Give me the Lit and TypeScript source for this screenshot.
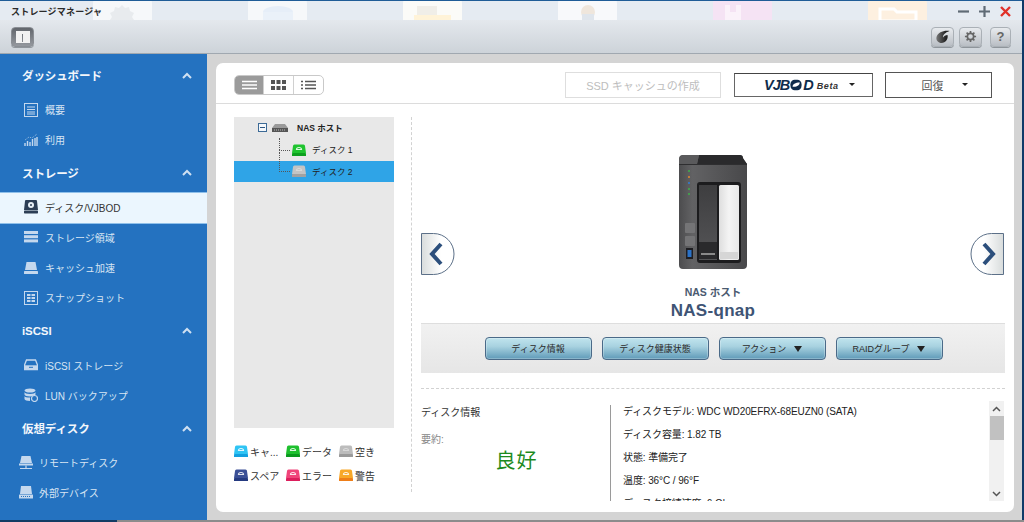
import { LitElement, html, css, svg } from "lit";
import { customElement } from "lit/decorators.js";

const disk = (top: string, bottom: string, mark = "#fff") => html`<svg class="disk" viewBox="0 0 14 12" width="14" height="12">
  <path d="M2.5 0.5h9a1.5 1.5 0 0 1 1.5 1.5l1 7h-14l1-7a1.5 1.5 0 0 1 1.5-1.5z" fill=${top}/>
  <rect x="0" y="9" width="14" height="3" rx="0.6" fill=${bottom}/>
  <path d="M4.5 5.5a2.5 2 0 0 1 5 0z" fill="none" stroke=${mark} stroke-width="1.2" opacity=".85"/>
</svg>`;

const chev = html`<svg class="chev" viewBox="0 0 10 7" width="10" height="7"><path d="M1 6l4-4 4 4" fill="none" stroke="#cfe0f2" stroke-width="2"/></svg>`;

const ic = {
  list: html`<svg viewBox="0 0 14 14" width="14" height="14"><rect x=".5" y=".5" width="13" height="13" fill="none" stroke="#c4d8ee"/><path d="M3 4h8M3 6.5h8M3 9h8M3 11h8" stroke="#c4d8ee"/></svg>`,
  chart: html`<svg viewBox="0 0 14 14" width="14" height="14"><path d="M1 13v-3M3.5 13V8M6 13V9M8.5 13V6M11 13V5M13 13V4" stroke="#c4d8ee" stroke-width="1.4"/><path d="M1 7l4-3 3 1 5-4" fill="none" stroke="#c4d8ee" stroke-width=".7" stroke-dasharray="1 1"/></svg>`,
  diskActive: html`<svg viewBox="0 0 14 14" width="14" height="14"><path d="M2 0h10a1 1 0 0 1 1 1l1 9H0l1-9a1 1 0 0 1 1-1z" fill="#2c3e55"/><rect y="10.5" width="14" height="3" rx=".7" fill="#2c3e55"/><circle cx="7" cy="5" r="3" fill="#e8f0f6"/><circle cx="7" cy="5" r="1" fill="#2c3e55"/></svg>`,
  stack: html`<svg viewBox="0 0 14 12" width="14" height="12"><rect y="0" width="14" height="3" fill="#c4d8ee"/><rect y="4.2" width="14" height="3" fill="#c4d8ee"/><rect y="8.4" width="14" height="3" fill="#c4d8ee"/></svg>`,
  cache: html`<svg viewBox="0 0 14 12" width="14" height="12"><path d="M2.5 0h9l1.5 8H1z" fill="#c4d8ee"/><rect y="9" width="14" height="3" rx=".6" fill="#c4d8ee"/></svg>`,
  snap: html`<svg viewBox="0 0 14 14" width="14" height="14"><rect x=".5" y=".5" width="13" height="13" fill="none" stroke="#c4d8ee"/><path d="M3 3h8v2H3zM3 6h8v2H3zM3 9h8v2H3z" fill="#c4d8ee"/><path d="M7 3v8" stroke="#2472c0"/></svg>`,
  iscsi: html`<svg viewBox="0 0 14 12" width="14" height="12"><path d="M2.5 1h9l2 5v4.5h-13V6z" fill="none" stroke="#c4d8ee" stroke-width="1.3"/><path d="M1 6.3h12v4H1z" fill="#c4d8ee"/><path d="M5 8.3h4" stroke="#2472c0"/></svg>`,
  lun: html`<svg viewBox="0 0 14 14" width="14" height="14"><ellipse cx="6" cy="2.5" rx="5.5" ry="2" fill="#c4d8ee"/><path d="M.5 4v2.5c0 1 2.5 2 5.5 2s5.5-1 5.5-2V4c0 1-2.5 2-5.5 2S.5 5 .5 4zM.5 8v3c0 1 2.5 2 5.5 2V9.5C3 9.5.5 9 .5 8z" fill="#c4d8ee"/><circle cx="10.5" cy="10.5" r="3" fill="#2472c0" stroke="#c4d8ee" stroke-width="1.2"/></svg>`,
  remote: html`<svg viewBox="0 0 14 14" width="14" height="14"><path d="M2.5 0h9l1.5 7H1z" fill="#c4d8ee"/><path d="M0 7.5h14v2H0z" fill="#c4d8ee"/><path d="M7 9.5V12M1 12.5h12" stroke="#c4d8ee" stroke-width="1.2"/></svg>`,
  ext: html`<svg viewBox="0 0 14 13" width="14" height="13"><path d="M2 0h10l1 8H1z" fill="#c4d8ee"/><rect y="8.5" width="14" height="4" rx=".6" fill="#c4d8ee"/><path d="M2 10.5h10" stroke="#2472c0" stroke-dasharray="1 1"/></svg>`,
};

const device = html`<svg viewBox="0 0 70 114" width="70" height="114">
  <defs>
    <linearGradient id="bd" x1="0" x2="1" y1="0" y2="0"><stop offset="0" stop-color="#4c4c4e"/><stop offset=".2" stop-color="#626264"/><stop offset="1" stop-color="#48484a"/></linearGradient>
    <linearGradient id="wh" x1="0" x2="1" y1="0" y2="0"><stop offset="0" stop-color="#dedede"/><stop offset=".5" stop-color="#f4f4f4"/><stop offset="1" stop-color="#e8e8e8"/></linearGradient>
    <linearGradient id="bay" x1="0" x2="0" y1="0" y2="1"><stop offset="0" stop-color="#3e3e40"/><stop offset="1" stop-color="#555557"/></linearGradient>
  </defs>
  <path d="M1 9V4a4 4 0 0 1 4-4h56a4 4 0 0 1 4 4l4 5v101a4 4 0 0 1-4 4H5a4 4 0 0 1-4-4z" fill="url(#bd)"/>
  <path d="M21 0h41a3 3 0 0 1 3 3l4 6H19z" fill="#2a2a2c"/>
  <path d="M1 9V5a5 5 0 0 1 5-5h15l-2 9z" fill="#5a5a5c"/>
  <path d="M1 9.5h68" stroke="#2e2e30"/>
  <circle cx="11" cy="16" r="1" fill="#3eb04a"/><circle cx="11" cy="22" r="1" fill="#e08a2a"/><circle cx="11" cy="28" r="1" fill="#2f7ed8"/><circle cx="11" cy="34" r="1" fill="#3eb04a"/><circle cx="11" cy="39" r="1" fill="#3eb04a"/>
  <rect x="19" y="27" width="44" height="81" rx="3" fill="#1c1c1e"/>
  <rect x="21" y="30" width="18" height="75" fill="url(#bay)"/>
  <rect x="21" y="87" width="18" height="17" fill="#2a2a2c"/><rect x="23" y="98" width="14" height="2" fill="#8a8a8a"/>
  <rect x="41" y="30" width="20" height="75" rx="1.5" fill="url(#wh)"/><rect x="42" y="97" width="18" height="7" fill="#d6d6d6"/>
  <rect x="7" y="68" width="10" height="10" rx="1" fill="#747476"/><rect x="7" y="81" width="10" height="10" rx="1" fill="#747476"/>
  <rect x="8" y="93" width="7" height="11" fill="#1e1e22"/><rect x="9.5" y="95" width="4" height="7" fill="#2a72c8"/>
</svg>`;

const vjLogo = html`<svg viewBox="0 0 14 13" width="12" height="12"><rect x=".5" y=".5" width="13" height="12" rx="5" fill="#0e2c4c"/><path d="M3 8.5c0-3 3-5 8.5-5-.5 3-3 5.5-8.500 5z" fill="#fff"/></svg>`;

@customElement("app-root")
export class AppRoot extends LitElement {
  static styles = css`
    :host { display: block; width: 1024px; height: 522px; overflow: hidden; background: #0f3a68; }
  `;
  render() { return html`<storage-window></storage-window>`; }
}

@customElement("storage-window")
export class StorageWindow extends LitElement {
  static styles = css`
    :host { display: flex; flex-direction: column; width: 1024px; height: 522px; font-family: "Liberation Sans", "Noto Sans CJK JP", sans-serif; color: #333; }
    * { box-sizing: border-box; }
    .win { width: 1022px; height: 520px; display: flex; flex-direction: column; flex: none; }
    .taskstrip { height: 2px; display: flex; flex: none; }
    .taskstrip .a { width: 117px; background: #123c64; }
    .taskstrip .b { flex: 1; background: #8c8c8c; }

    .head { height: 54px; flex: none; position: relative; background: #e5ebf2; border-bottom: 1px solid #a0a8b0; }
    .tiles { position: absolute; inset: 0 0 auto 0; height: 20px; overflow: hidden; border-top: 1px solid #1f5c97; }
    .tile { position: absolute; top: -9px; width: 59px; height: 29px; border-radius: 12px 12px 0 0; display: flex; justify-content: center; align-items: flex-end; }
    .titlerow { height: 20px; display: flex; align-items: center; padding: 2px 11px 0 11px; position: relative; }
    .title { font-size: 9px; font-weight: 700; color: #2a2a2a; flex: 1; letter-spacing: .2px; }
    .wc { display: flex; gap: 10px; align-items: center; }
    .toolrow { height: 33px; position: relative; display: flex; align-items: center; padding: 0 11px; background: linear-gradient(#e4e8ed, #cdd3d9); }
    .tb { width: 23px; height: 20px; border-radius: 4px; display: flex; align-items: center; justify-content: center; background: linear-gradient(#e8ebee, #b9bec4); border: 1px solid #aab0b6; box-shadow: 0 1px 0 #8f959b; font-size: 13px; font-weight: 700; color: #666; }
    .tb.dark { background: linear-gradient(#62666c, #94989e); border-color: #8a8e94; }
    .spacer { flex: 1; }
    .tbs { display: flex; gap: 5px; align-items: center; }
    .tb.q { margin-left: 3px; width: 21px; }

    .bodyrow { flex: 1; display: flex; min-height: 0; }
    .side { width: 207px; flex: none; background: #2472c0; padding-top: 4px; color: #d8e5f3; }
    .sh { height: 36px; margin-bottom: 1px; display: flex; align-items: center; padding: 0 15px 2px 22px; font-size: 11.5px; font-weight: 700; color: #f2f6fb; justify-content: space-between; letter-spacing: -.1px; }
    .si { height: 30.25px; display: flex; align-items: center; padding: 0 0 1px 24px; font-size: 10px; }
    .si .i { width: 21px; flex: none; display: flex; align-items: center; }
    .si.act { background: #ebf6fe; color: #333; box-shadow: 0 -1px 0 #8fc0ea, 0 1px 0 #8fc0ea; }
    .si.v { padding-left: 19px; }
    .si.v .i { width: 20px; }

    .main { flex: 1; background: #d4d4d4; padding: 9px 8px 8px 9px; min-width: 0; }
    .panel { height: 100%; background: #fff; border-radius: 7px; display: flex; flex-direction: column; overflow: hidden; }
    .tools { height: 41px; flex: none; border-bottom: 1px solid #dcdcdc; display: flex; align-items: center; padding: 3px 22px 0 18px; }
    .seg { display: flex; border: 1px solid #c9c9c9; border-radius: 5px; height: 20px; overflow: hidden; }
    .seg span { width: 29.33px; display: flex; align-items: center; justify-content: center; border-right: 1px solid #d0d0d0; }
    .seg span:last-child { border-right: 0; }
    .seg span.on { background: #9b9b9b; }
    .ssd { width: 156px; height: 26px; border: 1px solid #dedede; color: #bdbdbd; font-size: 11px; display: flex; align-items: center; justify-content: center; }
    .vj { width: 139px; height: 24px; margin-left: 13px; border: 1px solid #666; border-top-color: #444; display: flex; align-items: center; padding-left: 29px; color: #0e2c4c; }
    .vj b { font: italic 700 14.5px "Liberation Sans", sans-serif; letter-spacing: -1px; }
    .vj .logo { display: flex; margin: 0 1px 0 1px; }
    .vj i { font: italic 700 9px "Liberation Sans", sans-serif; letter-spacing: .6px; color: #333; margin-left: 4px; padding-top: 2px; }
    .caret { width: 0; height: 0; border: 3px solid transparent; border-top: 3px solid #222; border-bottom: 0; display: inline-block; }
    .vj .caret { margin-left: 10px; }
    .rc { width: 107px; height: 26px; margin-left: 12px; border: 1px solid #555; display: flex; align-items: center; justify-content: center; font-size: 11px; color: #555; gap: 18px; padding-left: 12px; }

    .content { flex: 1; display: flex; padding: 13px 9px 0 18px; min-height: 0; }
    .leftc { width: 160px; flex: none; }
    .tree { height: 311px; background: #e8e8e8; }
    .tr { height: 21.5px; display: flex; align-items: center; position: relative; font-size: 8.5px; color: #222; }
    .tr.root { padding: 0 0 1px 24px; font-weight: 700; font-size: 8.5px; height: 22px; }
    .tr.sub { padding-left: 58px; }
    .tr.sel { background: #2fa4e7; }
    .tr .lbl { margin-left: 6px; padding-bottom: 1px; }
    .tr .lbl.nas { margin-left: 9px; }
    .mbox { width: 9px; height: 9px; border: 1px solid #3c6a96; background: #f4f7fa; display: flex; align-items: center; justify-content: center; margin-right: 5px; }
    .mbox::after { content: ""; width: 5px; height: 1px; background: #2c5580; }
    .hline { position: absolute; left: 45px; top: 50%; width: 11px; border-top: 1px dotted #555; }
    .vline { position: absolute; left: 45px; top: -9px; height: 20px; border-left: 1px dotted #555; }
    .tr.first .vline { top: -1px; height: 12px; }
    .legend { display: grid; grid-template-columns: 52px 53px 50px; row-gap: 12px; padding-top: 17px; font-size: 10px; color: #333; }
    .lg { display: flex; align-items: center; gap: 2px; height: 12px; white-space: nowrap; }
    .lg .disk { flex: none; }
    .vsep { width: 1px; height: 375px; border-left: 1px dashed #d2d2d2; margin-left: 17px; margin-right: 9px; flex: none; }
    .detail { flex: 1; min-width: 0; display: flex; flex-direction: column; }
    .hero { height: 206px; flex: none; position: relative; display: flex; flex-direction: column; align-items: center; padding-top: 38px; }
    .hero .h1 { font-size: 10.5px; font-weight: 700; color: #4a5a70; margin-top: 16px; line-height: 14px; }
    .hero .h2 { font-size: 17px; font-weight: 700; color: #3e5475; line-height: 20px; margin-top: 2px; letter-spacing: .3px; }
    .nav { position: absolute; top: 116px; width: 34px; height: 42px; }
    .nav.l { left: 0; }
    .nav.r { right: 1px; }
    .band { height: 50px; flex: none; background: linear-gradient(#f1f1f1, #e6e6e6); border-top: 1px solid #dedede; display: flex; align-items: center; justify-content: center; gap: 10px; padding-left: 1px; }
    .btn { width: 107px; height: 23px; border: 1px solid #4a6a88; border-radius: 4px; background: linear-gradient(#c0e4ee, #a8d2e0 40%, #5f9ab8); font-size: 9px; color: #2a2a2a; display: flex; align-items: center; justify-content: center; gap: 8px; box-shadow: inset 0 0 0 1px rgba(255,255,255,.25); }
    .tri { width: 0; height: 0; border: 4px solid transparent; border-top: 6px solid #222; border-bottom: 0; }
    .dash { height: 0; border-top: 1px dashed #d2d2d2; margin-top: 15px; flex: none; }
    .info { height: 100px; margin-top: 12px; display: flex; flex: none; }
    .infol { width: 190px; flex: none; border-right: 1px solid #9a9a9a; font-size: 10px; color: #333; padding-top: 1px; height: 96px; margin-top: 4px; }
    .il1 { line-height: 14px; }
    .il2 { color: #888; margin-top: 13px; line-height: 14px; }
    .good { color: #1d8a1d; font-size: 20px; text-align: center; padding-left: 2px; line-height: 28px; letter-spacing: 1px; }
    .infor { flex: 1; min-width: 0; height: 100px; overflow: hidden; padding: 4px 0 0 12px; font-size: 10px; color: #222; letter-spacing: -.1px; }
    .infor div { height: 23px; line-height: 14px; }
    .sb { width: 15px; height: 100px; background: #f1f1f1; flex: none; display: flex; flex-direction: column; align-items: center; margin-right: 1px; }
    .sb svg { margin: 5px 0 4px; }
    .sb .th { width: 14px; height: 24px; background: #c1c1c1; }
    .sb .sp { flex: 1; }
  `;

  render() {
    const tiles: [number, string, any][] = [
      [93, "#f6f8fa", svg`<path d="M29 4l3 3 4-1 1 4 4 2-2 4 2 3h-24l2-3-2-4 4-2 1-4 4 1z" fill="#e8ebee"/>`],
      [248, "#f6f8fa", svg`<ellipse cx="30" cy="11" rx="15" ry="6" fill="#e6eef8"/><rect x="15" y="11" width="30" height="9" fill="#eaf1f9"/>`],
      [403, "#fbfbf8", svg`<rect x="14" y="5" width="20" height="9" fill="#f0eee8"/><rect x="11" y="14" width="37" height="6" fill="#fff3d8"/>`],
      [558, "#f8f9fb", svg`<circle cx="30" cy="11" r="7" fill="#efe6dc"/><rect x="24" y="13" width="12" height="7" fill="#dfe5ec"/>`],
      [713, "#f5e3f4", svg`<path d="M12 4h5v7h6V4h5v16H12z" fill="#fbf2fa"/>`],
      [868, "#fdf0e0", svg`<path d="M12 8h14l3 3h19v9H12z" fill="none" stroke="#fff" stroke-width="3"/>`],
    ];
    return html`
      <div class="win">
        <div class="head">
          <div class="tiles">
            ${tiles.map(([x, c, g]) => html`<div class="tile" style="left:${x}px;background:${c}"><svg viewBox="0 0 59 20" width="59" height="20">${g}</svg></div>`)}
          </div>
          <div class="titlerow">
            <div class="title">ストレージマネージャ</div>
            <div class="wc">
              <svg viewBox="0 0 11 11" width="11" height="11"><path d="M0 5.5h11" stroke="#5f6b76" stroke-width="2.2"/></svg>
              <svg viewBox="0 0 11 11" width="11" height="11"><path d="M0 5.5h11M5.5 0v11" stroke="#5f6b76" stroke-width="2.2"/></svg>
              <svg viewBox="0 0 11 11" width="11" height="11"><path d="M1 1l9 9M10 1l-9 9" stroke="#e0322a" stroke-width="2.4"/></svg>
            </div>
          </div>
          <div class="toolrow">
            <div class="tb dark"><svg viewBox="0 0 14 12" width="14" height="12"><rect x=".5" y=".5" width="13" height="11" fill="none" stroke="#f2f2f2"/><rect x="1" y="1" width="12" height="2" fill="#f2f2f2"/><rect x="1" y="3" width="5" height="8" fill="#f2f2f2"/><rect x="7" y="3" width="6" height="8" fill="#f2f2f2"/></svg></div>
            <div class="spacer"></div>
            <div class="tbs">
              <div class="tb"><svg viewBox="0 0 16 14" width="16" height="14"><defs><linearGradient id="sw" x1="0" x2="1"><stop offset="0" stop-color="#777"/><stop offset=".7" stop-color="#222"/></linearGradient></defs><path d="M15 1C9 0 3 2 1.5 7c-.8 3.5 2 6 5 6 4 0 7-4 6-8-2 0-3.5 1-4.5 2.5-.5-2 2-5 6.5-6.5z" fill="url(#sw)"/></svg></div>
              <div class="tb"><svg viewBox="0 0 14 14" width="13" height="13"><circle cx="7" cy="7" r="3.4" fill="none" stroke="#666" stroke-width="1.8"/><path d="M7 1v2.5M7 10.5V13M1 7h2.5M10.5 7H13M2.8 2.8l1.8 1.8M9.4 9.4l1.8 1.8M11.2 2.8L9.4 4.6M2.8 11.2l1.8-1.800" stroke="#666" stroke-width="1.8"/></svg></div>
              <div class="tb q">?</div>
            </div>
          </div>
        </div>
        <div class="bodyrow">
          <div class="side">
            <div class="sh">ダッシュボード ${chev}</div>
            <div class="si"><span class="i">${ic.list}</span>概要</div>
            <div class="si"><span class="i">${ic.chart}</span>利用</div>
            <div class="sh">ストレージ ${chev}</div>
            <div class="si act"><span class="i">${ic.diskActive}</span>ディスク/VJBOD</div>
            <div class="si"><span class="i">${ic.stack}</span>ストレージ領域</div>
            <div class="si"><span class="i">${ic.cache}</span>キャッシュ加速</div>
            <div class="si"><span class="i">${ic.snap}</span>スナップショット</div>
            <div class="sh">iSCSI ${chev}</div>
            <div class="si"><span class="i">${ic.iscsi}</span>iSCSI ストレージ</div>
            <div class="si"><span class="i">${ic.lun}</span>LUN バックアップ</div>
            <div class="sh">仮想ディスク ${chev}</div>
            <div class="si v"><span class="i">${ic.remote}</span>リモートディスク</div>
            <div class="si v"><span class="i">${ic.ext}</span>外部デバイス</div>
          </div>
          <div class="main">
            <div class="panel">
              <div class="tools">
                <div class="seg">
                  <span class="on"><svg viewBox="0 0 15 10" width="15" height="10"><path d="M0 1.5h15M0 5h15M0 8.5h15" stroke="#fff" stroke-width="1.6"/></svg></span>
                  <span><svg viewBox="0 0 15 10" width="15" height="10"><path d="M0 0h4v4H0zM5.5 0h4v4h-4zM11 0h4v4h-4zM0 6h4v4H0zM5.5 6h4v4h-4zM11 6h4v4h-4z" fill="#555"/></svg></span>
                  <span><svg viewBox="0 0 15 10" width="15" height="10"><path d="M0 1.5h2M0 5h2M0 8.5h2M4 1.5h11M4 5h11M4 8.5h11" stroke="#555" stroke-width="1.4"/></svg></span>
                </div>
                <div class="spacer"></div>
                <div class="ssd">SSD キャッシュの作成</div>
                <div class="vj"><b>VJB</b><span class="logo">${vjLogo}</span><b>D</b><i>Beta</i><span class="caret"></span></div>
                <div class="rc">回復 <span class="caret"></span></div>
              </div>
              <div class="content">
                <div class="leftc">
                  <div class="tree">
                    <div class="tr root">
                      <span class="mbox"></span>
                      <svg viewBox="0 0 16 8" width="16" height="8"><path d="M3 0h10l3 4H0z" fill="#9a9a9a"/><rect y="4" width="16" height="4" fill="#555"/><path d="M2 6h12" stroke="#bbb" stroke-dasharray="1 1"/></svg>
                      <span class="lbl nas">NAS ホスト</span>
                    </div>
                    <div class="tr sub first"><span class="vline"></span><span class="hline"></span>${disk("#1fc42f", "#0da01f")}<span class="lbl">ディスク 1</span></div>
                    <div class="tr sub sel"><span class="vline"></span><span class="hline"></span>${disk("#c4c4c4", "#a2a2a2", "#ddd")}<span class="lbl">ディスク 2</span></div>
                  </div>
                  <div class="legend">
                    <div class="lg">${disk("#2fc4f4", "#12a0e0")}キャ...</div>
                    <div class="lg">${disk("#1ec02e", "#0a9a1e")}データ</div>
                    <div class="lg">${disk("#bcbcbc", "#9a9a9a", "#ddd")}空き</div>
                    <div class="lg">${disk("#3a4f96", "#243a80")}スペア</div>
                    <div class="lg">${disk("#f0447a", "#dc1e5c")}エラー</div>
                    <div class="lg">${disk("#f8a828", "#ee7e18")}警告</div>
                  </div>
                </div>
                <div class="vsep"></div>
                <div class="detail">
                  <div class="hero">
                    ${device}
                    <div class="h1">NAS ホスト</div>
                    <div class="h2">NAS-qnap</div>
                    <svg class="nav l" viewBox="0 0 34 42"><defs><linearGradient id="nl" x1="0" x2="1"><stop offset="0" stop-color="#d8dcdc"/><stop offset=".6" stop-color="#fff"/></linearGradient></defs><path d="M.5.5h12a20.5 20.5 0 0 1 0 41H.5z" fill="url(#nl)" stroke="#5c7088"/><path d="M20 11l-9 10 9 10" fill="none" stroke="#2c4f7c" stroke-width="4"/></svg>
                    <svg class="nav r" viewBox="0 0 34 42"><defs><linearGradient id="nr" x1="1" x2="0"><stop offset="0" stop-color="#d8dcdc"/><stop offset=".6" stop-color="#fff"/></linearGradient></defs><path d="M33.5.5h-12a20.5 20.5 0 0 0 0 41h12z" fill="url(#nr)" stroke="#5c7088"/><path d="M14 11l9 10-9 10" fill="none" stroke="#2c4f7c" stroke-width="4"/></svg>
                  </div>
                  <div class="band">
                    <div class="btn">ディスク情報</div>
                    <div class="btn">ディスク健康状態</div>
                    <div class="btn">アクション <span class="tri"></span></div>
                    <div class="btn">RAIDグループ <span class="tri"></span></div>
                  </div>
                  <div class="dash"></div>
                  <div class="info">
                    <div class="infol">
                      <div class="il1">ディスク情報</div>
                      <div class="il2">要約:</div>
                      <div class="good">良好</div>
                    </div>
                    <div class="infor">
                      <div>ディスクモデル: WDC WD20EFRX-68EUZN0 (SATA)</div>
                      <div>ディスク容量: 1.82 TB</div>
                      <div>状態: 準備完了</div>
                      <div>温度: 36°C / 96°F</div>
                      <div>ディスク接続速度: 6 Gbps</div>
                    </div>
                    <div class="sb">
                      <svg viewBox="0 0 9 6" width="9" height="6"><path d="M1 5l3.5-3.5L8 5" fill="none" stroke="#555" stroke-width="1.5"/></svg>
                      <div class="th"></div>
                      <div class="sp"></div>
                      <svg viewBox="0 0 9 6" width="9" height="6"><path d="M1 1l3.5 3.5L8 1" fill="none" stroke="#555" stroke-width="1.5"/></svg>
                    </div>
                  </div>
                </div>
              </div>
            </div>
          </div>
        </div>
      </div>
      <div class="taskstrip"><div class="a"></div><div class="b"></div></div>
    `;
  }
}
